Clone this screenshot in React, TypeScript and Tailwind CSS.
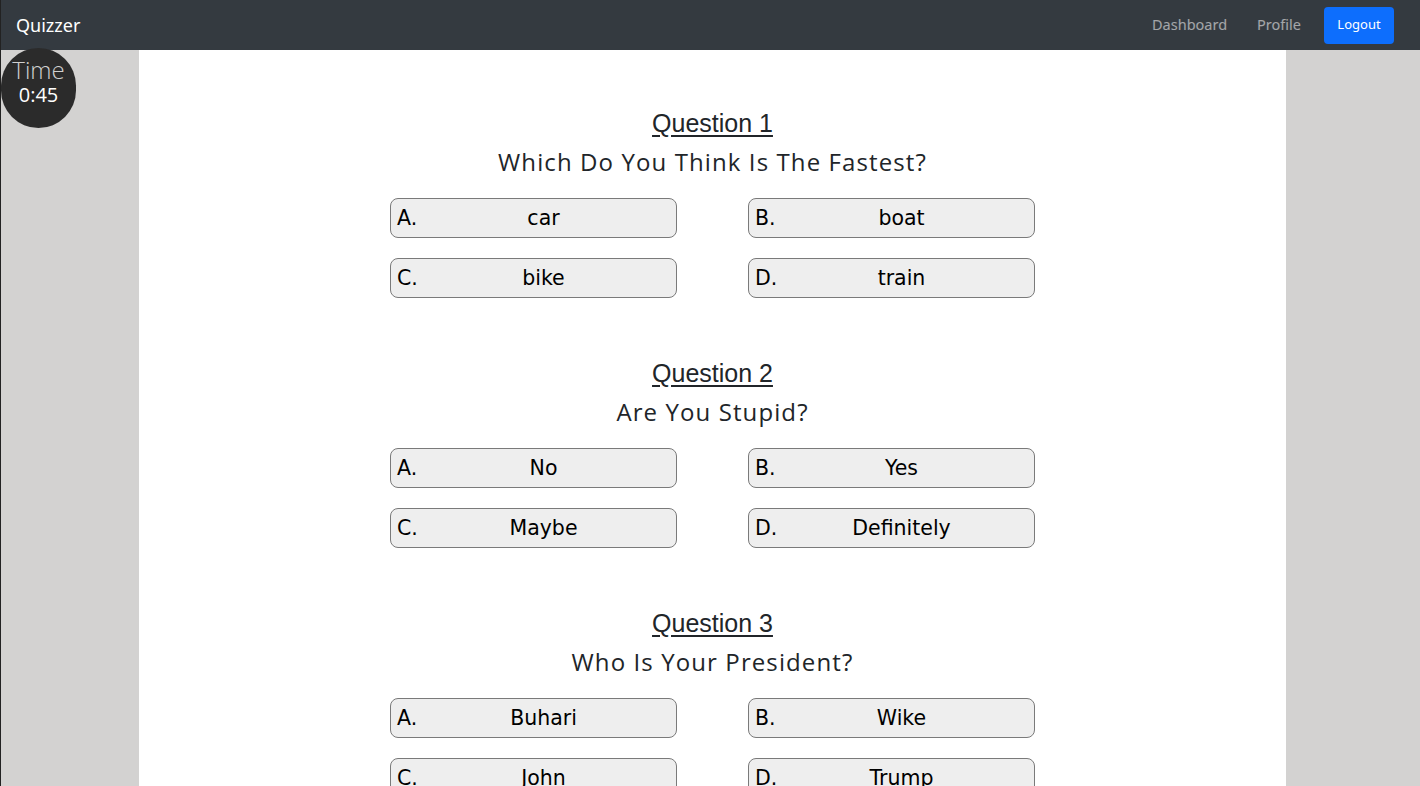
import React from 'react'

const questions = [
  {
    title: 'Question 1',
    text: 'Which Do You Think Is The Fastest?',
    options: ['car', 'boat', 'bike', 'train'],
  },
  {
    title: 'Question 2',
    text: 'Are You Stupid?',
    options: ['No', 'Yes', 'Maybe', 'Definitely'],
  },
  {
    title: 'Question 3',
    text: 'Who Is Your President?',
    options: ['Buhari', 'Wike', 'John', 'Trump'],
  },
]

const letters = ['A.', 'B.', 'C.', 'D.']

function Option({ letter, label }: { letter: string; label: string }) {
  return (
    <button className="relative flex h-10 w-[287px] items-center justify-center rounded-lg border border-[#7a7a7a] bg-[#eeeeee] pl-[20px] text-[20.5px] text-black [font-family:'DejaVu_Sans',sans-serif]">
      <span className="absolute left-[6px]">{letter}</span>
      <span>{label}</span>
    </button>
  )
}

export default function App() {
  return (
    <div className="relative h-[786px] overflow-hidden border-l border-[#222] bg-[#d3d2d1]">
      <nav className="flex h-[50px] items-center justify-between bg-[#343a40] pl-[15px] pr-[26px] [font-family:'Noto_Sans',sans-serif]">
        <span className="text-[18px] text-white">Quizzer</span>
        <div className="flex items-center">
          <a className="mr-[30px] text-[14.5px] text-white/55">Dashboard</a>
          <a className="mr-[23px] text-[14.5px] text-white/55">Profile</a>
          <button className="h-[37px] w-[70px] rounded bg-[#0d6efd] text-[13px] text-white">Logout</button>
        </div>
      </nav>

      <div className="absolute left-0 top-[48px] flex h-[80px] w-[75px] flex-col items-center rounded-full bg-[#2b2b2b] pt-[9px] [font-family:'Open_Sans',sans-serif]">
        <span className="text-[24px] font-light leading-[26px] text-[#d0d0d0]">Time</span>
        <span className="text-[20px] leading-[24px] text-white">0:45</span>
      </div>

      <main className="ml-[138px] flex h-full w-[1147px] flex-col items-center bg-white pt-[58px]">
        {questions.map((q) => (
          <section key={q.title} className="mb-[60px] flex flex-col items-center">
            <h2 className="text-[25px] leading-[30px] text-[#212529] underline underline-offset-[3px] [font-family:'Liberation_Sans',Arial,sans-serif]">
              {q.title}
            </h2>
            <p className="mt-[9px] text-[24px] leading-[30px] tracking-[1.1px] text-[#212529] [font-family:'Open_Sans',sans-serif]">
              {q.text}
            </p>
            <div className="mt-[21px] grid grid-cols-2 gap-x-[71px] gap-y-[20px]">
              {q.options.map((o, i) => (
                <Option key={o} letter={letters[i]} label={o} />
              ))}
            </div>
          </section>
        ))}
      </main>
    </div>
  )
}
